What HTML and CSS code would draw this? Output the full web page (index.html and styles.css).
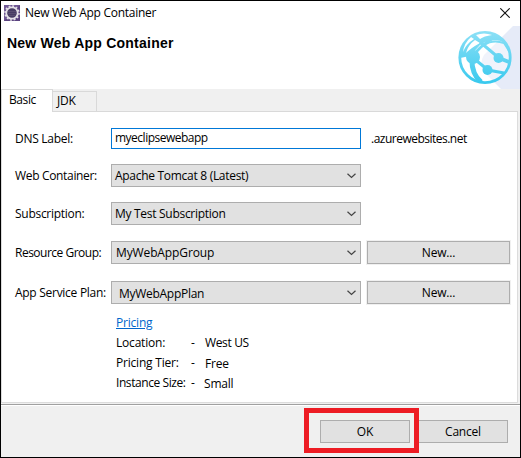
FILE: index.html
```html
<!DOCTYPE html>
<html lang="en">
<head>
<meta charset="utf-8">
<title>New Web App Container</title>
<link rel="stylesheet" href="styles.css">
</head>
<body>
<div class="window">
  <header class="header">
    <div class="titlebar">
      <svg class="app-icon" width="16" height="16" viewBox="0 0 16 16">
        <rect width="16" height="16" fill="#6f5793"/>
        <path d="M0 16L16 0V16Z" fill="#5b4380"/>
        <circle cx="8" cy="8" r="5.7" fill="#473c63" stroke="#e4e1e7" stroke-width="1.8"/>
        <circle cx="8" cy="8" r="7" fill="none" stroke="#e4e1e7" stroke-width="1.5" stroke-dasharray="1.9 1.765"/>
        <path d="M4 6.5H12M3.7 8.5H12.3M4.3 10.5H11.7" stroke="#584d70"/>
      </svg>
      <span class="window-title">New Web App Container</span>
      <svg class="close" width="10" height="10" viewBox="0 0 10 10"><path d="M.3 .3L9.7 9.7M9.7 .3L.3 9.7" stroke="#111" stroke-width="1.1"/></svg>
    </div>
    <h1>New Web App Container</h1>
    <svg class="logo" width="65" height="64" viewBox="455 25 65 64">
      <defs>
        <linearGradient id="sky" x1="0" y1="31" x2="0" y2="84" gradientUnits="userSpaceOnUse"><stop stop-color="#8ce0f6"/><stop offset="1" stop-color="#38c9ee"/></linearGradient>
        <clipPath id="globe"><circle cx="485" cy="57.5" r="25"/></clipPath>
      </defs>
      <path d="M520 26H513L484 55Q479 63 483 71L501 89H520Z" fill="#e6ebf8"/>
      <circle cx="485" cy="57.5" r="25.2" fill="#fff" fill-opacity=".4" stroke="url(#sky)" stroke-width="2.8"/>
      <g clip-path="url(#globe)" fill="none" stroke="url(#sky)">
        <path d="M460 58Q461 46 470 36L478 31H498L508 42Q494 36 480 45L470 56" stroke="none" fill="url(#sky)"/>
        <path d="M463 52Q464 43 471 37L474 39Q466 44 463 52ZM476 35Q484 32 492 35Q484 36 480 39ZM475 40L480 43Q471 48 466 53Q468 45 475 40Z" stroke="none" fill="#fff"/>
        <path d="M492 39Q505 37 511 49M480 42L499 58M472 57L488 70L504 73M472 57Q481 45 492 39" stroke-width="3"/>
        <path d="M484 45Q493 39 504 43L511 54" stroke-width="2"/>
        <path d="M499 58L509 62" stroke-width="4"/>
        <path d="M472 58Q471 73 481 82" stroke-width="5"/>
      </g>
      <g fill="url(#sky)"><circle cx="473" cy="57" r="7"/><circle cx="498.5" cy="58" r="5"/><circle cx="487.5" cy="70" r="5"/></g>
    </svg>
  </header>

  <nav class="tabs"><div class="tab active">Basic</div><div class="tab jdk">JDK</div><div class="tab-rest"></div></nav>

  <main class="panel">
    <div class="row dns"><label class="l-dns">DNS Label:</label><div class="field input"><span class="v-dns">myeclipsewebapp</span></div><span class="suffix">.azurewebsites.net</span></div>
    <div class="row container"><label class="l-web">Web Container:</label><div class="field select"><span class="v-web">Apache Tomcat 8 (Latest)</span><svg class="chevron" width="9" height="6" viewBox="0 0 9 6"><path d="M.5 .7L4.5 4.5L8.5 .7"/></svg></div></div>
    <div class="row subscription"><label class="l-sub">Subscription:</label><div class="field select"><span class="v-sub">My Test Subscription</span><svg class="chevron" width="9" height="6" viewBox="0 0 9 6"><path d="M.5 .7L4.5 4.5L8.5 .7"/></svg></div></div>
    <div class="row group"><label class="l-group">Resource Group:</label><div class="field select"><span class="v-group">MyWebAppGroup</span><svg class="chevron" width="9" height="6" viewBox="0 0 9 6"><path d="M.5 .7L4.5 4.5L8.5 .7"/></svg></div><div class="button new"><span>New...</span></div></div>
    <div class="row plan"><label class="l-plan">App Service Plan:</label><div class="field select"><span class="v-plan">MyWebAppPlan</span><svg class="chevron" width="9" height="6" viewBox="0 0 9 6"><path d="M.5 .7L4.5 4.5L8.5 .7"/></svg></div><div class="button new"><span>New...</span></div></div>
    <div class="details">
      <a class="pricing">Pricing</a>
      <div class="detail"><span class="key">Location:</span><span class="dash">-</span><span class="d-loc">West US</span></div>
      <div class="detail"><span class="key">Pricing Tier:</span><span class="dash">-</span><span class="d-tier">Free</span></div>
      <div class="detail"><span class="key k-size">Instance Size:</span><span class="dash">-</span><span class="d-size">Small</span></div>
    </div>
  </main>

  <footer class="footer"><div class="highlight"><div class="button ok"><span>OK</span></div></div><div class="button cancel"><span>Cancel</span></div></footer>
</div>
</body>
</html>
```

FILE: styles.css
```css
* { box-sizing: border-box; }
body { margin: 0; font: 12px/16px "Open Sans", "Noto Sans", sans-serif; color: #000; letter-spacing: -.2px; white-space: nowrap; }
.window { width: 521px; height: 458px; border: 1px solid #000; background: #f0f0f0; display: flex; flex-direction: column; }
.header { position: relative; height: 88px; background: #fff; flex: none; }
.titlebar { display: flex; height: 24px; padding: 4px 10px 0 3px; }
.window-title { margin: 0 auto 0 5px; letter-spacing: -.28px; }
.close { margin-top: 3px; }
h1 { font: bold 14px/16px "Liberation Sans", sans-serif; margin: 10px 0 0 6px; letter-spacing: .23px; }
.logo { position: absolute; left: 454px; top: 24px; }
.tabs { display: flex; height: 23px; flex: none; }
.tab { border: 1px solid #d9d9d9; }
.active { width: 52px; background: #fff; border-bottom: 0; padding: 2px 0 0 7px; letter-spacing: -.4px; }
.jdk { width: 44px; margin-top: 2px; border-left: 0; padding: 1px 0 0 4px; }
.tab-rest { flex: 1; border-bottom: 1px solid #d9d9d9; margin-right: 2px; }
.panel { height: 291px; flex: none; margin-right: 2px; background: #fff; border: 1px solid #dcdcdc; border-top: 0; padding-top: 16px; }
.row { display: flex; align-items: center; height: 23px; padding-left: 13px; }
.dns { height: 21px; margin-bottom: 15px; }
.container { margin-bottom: 15px; }
.subscription { margin-bottom: 16px; }
.group { margin-bottom: 17px; }
label { width: 96px; flex: none; padding-top: 1px; }
.l-dns, .l-sub, .l-plan { letter-spacing: -.28px; }
.l-web { letter-spacing: -.33px; }
.l-group { letter-spacing: -.5px; }
.field { width: 250px; height: 23px; flex: none; display: flex; align-items: center; padding: 0 4px 0 3px; }
.input { height: 21px; border: 1px solid #0078d7; }
.input .v-dns { letter-spacing: -.5px; padding-bottom: 1px; }
.select { background: #e1e1e1; border: 1px solid #adadad; }
.select span { padding-top: 1px; }
.v-web, .v-sub { letter-spacing: -.29px; }
.v-group { letter-spacing: -.12px; }
.chevron { margin-left: auto; fill: none; stroke: #444; stroke-width: 1.2; }
.suffix { margin-left: 10px; letter-spacing: -.51px; }
.button { height: 23px; background: #e1e1e1; border: 1px solid #adadad; display: flex; align-items: center; justify-content: center; }
.new { width: 143px; margin-left: 6px; outline: 1px solid #f0f0f0; }
.group .field { padding-left: 4px; }
.plan .field { padding-left: 7px; }
.v-plan { letter-spacing: -.28px; position: relative; top: 1px; }
.details { padding: 11px 0 0 114px; }
.pricing { display: block; width: 37px; color: #0066cc; text-decoration: underline; margin-bottom: 4px; }
.detail { display: flex; height: 20px; }
.key { width: 75px; }
.k-size { letter-spacing: -.42px; }
.dash { width: 14px; }
.d-loc { letter-spacing: -.35px; }
.d-tier, .d-size { padding-top: 1px; }
.d-size { margin-left: -1px; }
.footer { margin-top: 1px; border-top: 1px solid #a0a0a0; box-shadow: inset 0 1px #fff; flex: 1; display: flex; padding: 3px 0 0 303px; }
.highlight { width: 115px; height: 45px; border: 5px solid #ed1c24; padding: 7px 0 0 11px; }
.ok { width: 90px; }
.cancel { width: 89px; margin-top: 12px; border-left: 0; }
```
